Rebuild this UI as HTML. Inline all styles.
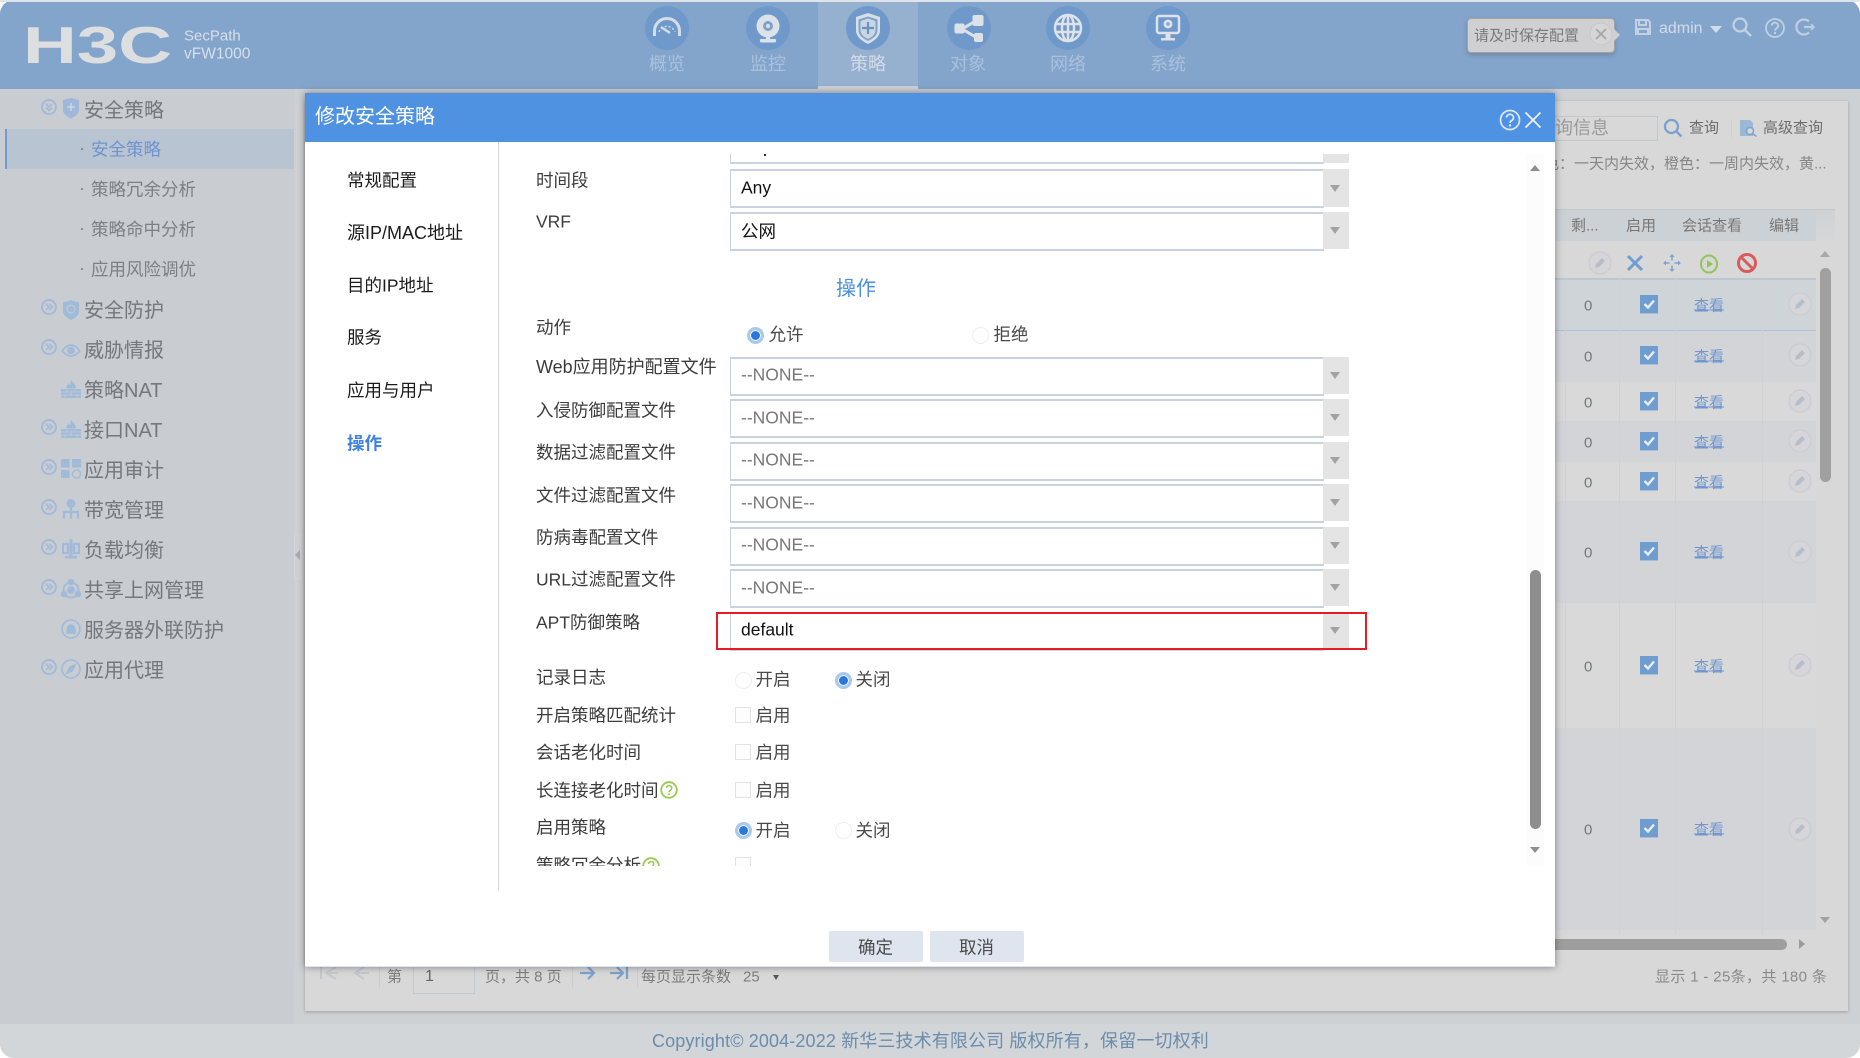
<!DOCTYPE html>
<html lang="zh-CN"><head><meta charset="utf-8"><title>修改安全策略</title>
<style>
html,body{margin:0;padding:0;width:1860px;height:1058px;overflow:hidden;background:#fff}
body{font-family:"Liberation Sans","Noto Sans CJK SC",sans-serif;position:relative}
div,span,svg{position:absolute}
.t{white-space:nowrap;line-height:1;transform:translateY(-50%)}
.nl{font-size:18px;color:#aac1dc;transform:translate(-50%,-50%);white-space:nowrap;line-height:1;margin-top:1px}
.nc{width:44px;height:44px;border-radius:50%;background:#6f99cb;top:6px}
.sb{font-size:20px;color:#74777b;left:84px;margin-top:1px}
.ss{font-size:17.5px;color:#7c7f83;left:91px;margin-top:1px}
.sd{width:2px;height:2px;background:#8a8d90;left:81px}
.th{font-size:15px;color:#777}
.c{left:1640px;width:18px;height:18px;background:#6f9dd0;box-shadow:0 1px 0 #a9bdd4}
.v{font-size:15px;color:#75787b;left:1584px}
.k{font-size:15px;color:#6f96d0;left:1694px;text-decoration:underline;text-decoration-thickness:1px;text-underline-offset:-1px}
.e{left:1788px}
.r{left:1310px;width:506px}
.cl{width:1px;background:#cfd1d4;top:279px;height:655px}
.lb{font-size:17.5px;color:#3c3c3c;left:536px;margin-top:1px}
.mn{font-size:17.5px;color:#1c1c1c;left:347px;margin-top:1px}
.sel{left:730px;width:592px;height:35px;border:1px solid #c9d3e0;border-width:2px 1px 2px 1px;background:#fff}
.arr{width:26px;background:#e4e4e4;left:1323px}
.tri{width:0;height:0;border-left:5.500px solid transparent;border-right:5.500px solid transparent;border-top:7px solid #a2a2a2;left:1330px;margin-top:1px}
.sv{font-size:17.5px;color:#777;left:741px}
.ra{width:17px;height:17px;border-radius:50%;box-sizing:border-box;border:1px solid #eee;background:#fff}
.ra.on{border:3px solid #a9c9ef;background:#2a78dc;box-shadow:inset 0 0 0 1px #fff}
.cb{width:16px;height:16px;box-sizing:border-box;border:1px solid #e2e2e2;background:#fdfdfd;left:735px}
.op{font-size:17.5px;color:#4a4a4a}
.pg{font-size:15px;color:#7d7d7d;top:977px}
</style></head><body>

<!-- page background -->
<div style="left:0;top:0;width:1860px;height:1058px;background:#cfd1d5;border-radius:14px 14px 14px 14px;overflow:hidden">
  <div style="left:294px;top:89px;width:1566px;height:935px;background:#ced1d4"></div>
  <div style="left:0;top:89px;width:294px;height:935px;background:#c9ccd1"></div>
  <div style="left:0;top:1024px;width:1860px;height:34px;background:#d3d6d8"></div>
  <div style="left:0;top:2px;width:1860px;height:87px;background:#83a5cc"></div>
</div>
<div style="left:0;top:0;width:1860px;height:2px;background:#dfe4ea"></div>

<!-- header -->
<svg style="left:20px;top:20px" width="160" height="50"><text x="3" y="43" font-family="Liberation Sans" font-weight="700" font-size="52" fill="#dcdee0" textLength="149" lengthAdjust="spacingAndGlyphs">H3C</text></svg>
<div class="t" style="left:184px;top:36px;font-size:15px;color:#d8dfe8">SecPath</div>
<div class="t" style="left:184px;top:54px;font-size:15.500px;color:#d8dfe8">vFW1000</div>

<div style="left:818px;top:2px;width:100px;height:84px;background:#96b0d0"></div>
<div style="left:818px;top:86px;width:100px;height:3px;background:#cdd2d8"></div>

<div class="nc" style="left:645px"></div>
<div class="nc" style="left:746px"></div>
<div class="nc" style="left:846px"></div>
<div class="nc" style="left:947px"></div>
<div class="nc" style="left:1046px"></div>
<div class="nc" style="left:1146px"></div>

<svg style="left:645px;top:6px" width="44" height="44" fill="none" stroke="#d5dde6"><path d="M9.500 30v-5a12.500 12.500 0 0 1 25 0v5" stroke-width="3"/><path d="M16 21l9 6" stroke-width="2.500"/><path d="M14 26a8.500 8.500 0 0 1 16 0" stroke-width="1.500" stroke-dasharray="2 2"/></svg>
<svg style="left:746px;top:6px" width="44" height="44"><circle cx="22" cy="20" r="11.500" fill="#dde2e8"/><circle cx="22" cy="20" r="5" fill="#7ea2cb"/><circle cx="22" cy="20" r="2" fill="#dde2e8"/><rect x="20" y="31" width="4" height="3" fill="#dde2e8"/><rect x="14" y="33" width="16" height="3.500" rx="1" fill="#dde2e8"/></svg>
<svg style="left:846px;top:6px" width="44" height="44"><path d="M22 7l12 4v13c0 7-6 11-12 14-6-3-12-7-12-14V11z" fill="#d8dfe7"/><path d="M22 10.500l9.500 3v10.500c0 5.500-4.500 8.500-9.500 11-5-2.500-9.500-5.500-9.500-11V13.500z" fill="#7da3cc"/><path d="M22 12.500l7.500 2.500v9c0 4.500-3.500 7-7.500 9z M22 12.500l-7.500 2.500v9c0 4.500 3.500 7 7.500 9z" fill="#c9d6e4"/><path d="M22 16v12M16 22h12" stroke="#6c92bf" stroke-width="2.200"/></svg>
<svg style="left:947px;top:6px" width="44" height="44"><path d="M15 23L32 13M15 23l17 10" stroke="#dde2e8" stroke-width="3"/><rect x="7.500" y="17.500" width="10" height="10" rx="2" fill="#dde2e8"/><rect x="25.500" y="9" width="11" height="11" rx="2" fill="#dde2e8"/><rect x="27" y="27" width="9" height="9" rx="2" fill="#dde2e8"/></svg>
<svg style="left:1046px;top:6px" width="44" height="44" fill="none" stroke="#dde2e8" stroke-width="2.500"><circle cx="22" cy="22" r="13"/><ellipse cx="22" cy="22" rx="6" ry="13"/><path d="M22 9v26M9.500 18h25M9.500 26h25"/></svg>
<svg style="left:1146px;top:6px" width="44" height="44"><rect x="11" y="10" width="22" height="17" rx="2" fill="none" stroke="#dde2e8" stroke-width="2.500"/><circle cx="22" cy="18" r="4.500" fill="#dde2e8"/><circle cx="22" cy="18" r="1.700" fill="#7da3cc"/><rect x="19.500" y="28" width="5" height="4" fill="#dde2e8"/><rect x="15" y="32" width="14" height="2.500" fill="#dde2e8"/></svg>

<div class="nl" style="left:667px;top:63px">概览</div>
<div class="nl" style="left:768px;top:63px">监控</div>
<div class="nl" style="left:868px;top:63px;color:#d3dce6">策略</div>
<div class="nl" style="left:968px;top:63px">对象</div>
<div class="nl" style="left:1068px;top:63px">网络</div>
<div class="nl" style="left:1168px;top:63px">系统</div>

<!-- tooltip -->
<div style="left:1467px;top:18px;width:148px;height:35px;box-sizing:border-box;background:#d0d0d3;border:1px solid #a3a3a3;border-radius:4px;box-shadow:0 2px 5px rgba(60,60,60,.3)"></div>
<div style="left:1614px;top:29px;width:0;height:0;border-left:6px solid #d0d0d3;border-top:6px solid transparent;border-bottom:6px solid transparent"></div>
<div class="t" style="left:1474px;top:36px;font-size:15px;color:#7a7a7a">请及时保存配置</div>
<svg style="left:1589px;top:22px" width="24" height="24"><circle cx="12" cy="12" r="11" fill="#d6d6d9" stroke="#c8c8cb"/><path d="M7 7l10 10M17 7L7 17" stroke="#a6a6a8" stroke-width="1.800"/></svg>

<svg style="left:1634px;top:18px" width="18" height="18" fill="none" stroke="#c4d1e0" stroke-width="2"><path d="M2 2h12l2 2v12H2z"/><path d="M5 2v5h7V2M4 11h10v5H4z"/></svg>
<div class="t" style="left:1659px;top:28px;font-size:16px;color:#d3dce6;margin-top:1px">admin</div>
<div style="left:1710px;top:26px;width:0;height:0;border-left:6.500px solid transparent;border-right:6.500px solid transparent;border-top:7px solid #d3dce6"></div>
<svg style="left:1732px;top:17px" width="20" height="20" fill="none" stroke="#c4d1e0" stroke-width="2.300"><circle cx="8" cy="8" r="6.500"/><path d="M13 13l6 6"/></svg>
<svg style="left:1764px;top:17px" width="22" height="22"><circle cx="11" cy="11" r="9" fill="none" stroke="#c0d0e2" stroke-width="1.800"/><path d="M7.800 8.500a3.200 3 0 1 1 4.800 2.700c-1 .7-1.500 1.200-1.500 2.500" fill="none" stroke="#c0d0e2" stroke-width="1.800"/><circle cx="11" cy="16" r="1.200" fill="#c0d0e2"/></svg>
<svg style="left:1795px;top:17px" width="22" height="20" fill="none" stroke="#c0d0e2" stroke-width="2.200"><path d="M14 4.500a7.500 7.500 0 1 0 0 11"/><path d="M9 10h9"/><path d="M16 7l3 3-3 3" stroke-width="1.500"/></svg>

<!-- sidebar -->
<div style="left:5px;top:129px;width:289px;height:40px;background:#b9c4d3;border-left:2px solid #6f9bd1;box-sizing:border-box"></div>
<svg width="0" height="0" style="left:0;top:0"><defs>
<g id="ch"><circle cx="8" cy="8" r="7" fill="none" stroke="#9db8da" stroke-width="1.700"/><path d="M5 5l3 3-3 3M8.500 5l3 3-3 3" fill="none" stroke="#9db8da" stroke-width="1.500"/></g>
<g id="fw"><path d="M10 0c.5 3 5 4.500 5 9.500H5c0-2.500 1.500-3 2.500-5 .5 1 1 1.500 1.500 1.500C9.500 4 10 2 10 0z" fill="#a0bada"/><rect x="0" y="10" width="20" height="9" fill="#a0bada"/><path d="M0 13h20M0 16h20M6 10v3M14 10v3M10 13v3M4 16v3M16 16v3" stroke="#c9ccd1" stroke-width=".8"/></g>
</defs></svg>
<svg style="left:41px;top:99px" width="16" height="16"><circle cx="8" cy="8" r="7" fill="none" stroke="#9db8da" stroke-width="1.700"/><path d="M5 5l3 3 3-3M5 8.500l3 3 3-3" fill="none" stroke="#9db8da" stroke-width="1.500"/></svg>
<svg style="left:62px;top:97px" width="18" height="22"><path d="M9 1l8 2v10c0 4-4 6.500-8 8.500-4-2-8-4.500-8-8.500V3z" fill="#9db8d9"/><path d="M9 6v8M5 10h8" stroke="#cdd7e2" stroke-width="1.500"/></svg>
<div class="t sb" style="top:110px">安全策略</div>
<div class="sd" style="top:148px"></div><div class="t ss" style="top:149px;color:#6f93cc">安全策略</div>
<div class="sd" style="top:188px"></div><div class="t ss" style="top:189px">策略冗余分析</div>
<div class="sd" style="top:228px"></div><div class="t ss" style="top:229px">策略命中分析</div>
<div class="sd" style="top:268px"></div><div class="t ss" style="top:269px">应用风险调优</div>

<svg style="left:41px;top:299px" width="16" height="16"><use href="#ch"/></svg>
<svg style="left:62px;top:299px" width="18" height="22"><path d="M1 3c3 0 6-1 8-2 2 1 5 2 8 2v9c0 4-4 7-8 9-4-2-8-5-8-9z" fill="#a0bada"/><circle cx="9" cy="10" r="4" fill="none" stroke="#c9ccd1"/></svg>
<div class="t sb" style="top:310px">安全防护</div>
<svg style="left:41px;top:339px" width="16" height="16"><use href="#ch"/></svg>
<svg style="left:61px;top:342px" width="20" height="16"><path d="M1 9c3-4 6-6 9-6s6 2 9 6" fill="none" stroke="#a0bada" stroke-width="1.800"/><path d="M1 9c3 3 6 5 9 5s6-2 9-5" fill="none" stroke="#a0bada" stroke-width="1.600"/><circle cx="10" cy="8.500" r="3.800" fill="#a0bada"/></svg>
<div class="t sb" style="top:350px">威胁情报</div>
<svg style="left:61px;top:379px" width="20" height="20"><use href="#fw"/></svg>
<div class="t sb" style="top:390px">策略NAT</div>
<svg style="left:41px;top:419px" width="16" height="16"><use href="#ch"/></svg>
<svg style="left:61px;top:419px" width="20" height="20"><use href="#fw"/></svg>
<div class="t sb" style="top:430px">接口NAT</div>
<svg style="left:41px;top:459px" width="16" height="16"><use href="#ch"/></svg>
<svg style="left:61px;top:459px" width="20" height="20" fill="#a0bada"><rect width="8.500" height="8.500"/><rect x="11" width="9" height="8.500"/><rect y="11" width="8.500" height="8"/><circle cx="15.500" cy="15" r="4" fill="none" stroke="#a0bada" stroke-width="1.300"/></svg>
<div class="t sb" style="top:470px">应用审计</div>
<svg style="left:41px;top:499px" width="16" height="16"><use href="#ch"/></svg>
<svg style="left:62px;top:499px" width="18" height="20" fill="none" stroke="#a0bada" stroke-width="2.200"><circle cx="9" cy="4.500" r="3.300" fill="#a0bada"/><path d="M9 8v5M2 19.500V13h14v6.500M9 13v6.500"/></svg>
<div class="t sb" style="top:510px">带宽管理</div>
<svg style="left:41px;top:539px" width="16" height="16"><use href="#ch"/></svg>
<svg style="left:62px;top:539px" width="18" height="20" fill="#a0bada"><rect x="7.500" y="0" width="3" height="18"/><rect x="3" y="17" width="12" height="2.500"/><path d="M1 5h5v9H1zM12 5h5v9h-5z" fill="none" stroke="#a0bada" stroke-width="2.200"/></svg>
<div class="t sb" style="top:550px">负载均衡</div>
<svg style="left:41px;top:579px" width="16" height="16"><use href="#ch"/></svg>
<svg style="left:61px;top:579px" width="20" height="20" fill="none" stroke="#a0bada" stroke-width="1.800"><circle cx="10" cy="11" r="7.500"/><circle cx="10" cy="11" r="3" fill="#a0bada"/><circle cx="10" cy="3" r="2.300" fill="#a0bada"/><circle cx="3" cy="15" r="2.300" fill="#a0bada"/><circle cx="17" cy="15" r="2.300" fill="#a0bada"/></svg>
<div class="t sb" style="top:590px">共享上网管理</div>
<svg style="left:61px;top:619px" width="20" height="20" fill="none" stroke="#a0bada" stroke-width="1.600"><circle cx="10" cy="10" r="9"/><path d="M6 14c0-5 1-8 4-8s4 3 4 8z" fill="#a0bada"/></svg>
<div class="t sb" style="top:630px">服务器外联防护</div>
<svg style="left:41px;top:659px" width="16" height="16"><use href="#ch"/></svg>
<svg style="left:61px;top:659px" width="20" height="20" fill="none" stroke="#a0bada" stroke-width="1.600"><circle cx="10" cy="10" r="9"/><path d="M14 6l-3 6-5 2 3-6z" fill="#a0bada"/></svg>
<div class="t sb" style="top:670px">应用代理</div>

<div style="left:294px;top:534px;width:5px;height:43px;border:1px solid #d2d4d8"></div>
<div style="left:295px;top:550px;width:0;height:0;border-right:5px solid #a7aaae;border-top:5px solid transparent;border-bottom:5px solid transparent"></div>

<!-- panel -->
<div style="left:305px;top:101px;width:1543px;height:910px;background:#d8d8d8;box-shadow:0 1px 3px rgba(90,90,90,.45)"></div>
<div style="left:1500px;top:116px;width:158px;height:25px;box-sizing:border-box;border:1px solid #c2c8d0"></div>
<div class="t" style="left:1555px;top:128px;font-size:18px;color:#9a9a9a">询信息</div>
<svg style="left:1663px;top:118px" width="20" height="20" fill="none" stroke="#7ba2cf" stroke-width="2.300"><circle cx="8.500" cy="8.500" r="6.500"/><path d="M13.500 13.500l5 5"/></svg>
<div class="t th" style="left:1689px;top:128px;color:#6d6d6d">查询</div>
<div style="left:1731px;top:120px;width:1px;height:17px;background:#cfcfcf"></div>
<svg style="left:1739px;top:118px" width="19" height="20"><path d="M1 2h10l3 3v13H1z" fill="#9cb8d8"/><circle cx="11" cy="13" r="3.500" fill="#d8d8d8" stroke="#7ba2cf" stroke-width="1.500"/><path d="M13.500 15.500l4 3" stroke="#7ba2cf" stroke-width="1.500"/></svg>
<div class="t th" style="left:1763px;top:128px;color:#6d6d6d">高级查询</div>
<div class="t th" style="left:1544px;top:164px;color:#868686">色：一天内失效，橙色：一周内失效，黄...</div>

<div style="left:1310px;top:209px;width:525px;height:32px;border-top:1px solid #c4c7ca;box-sizing:border-box;background:linear-gradient(#cfd2d5,#d6d7d8)"></div>
<div style="left:1310px;top:210px;width:506px;height:31px;background:#ccd1d5"></div>
<div class="t th" style="left:1571px;top:226px">剩...</div>
<div class="t th" style="left:1626px;top:226px">启用</div>
<div class="t th" style="left:1682px;top:226px">会话查看</div>
<div class="t th" style="left:1769px;top:226px">编辑</div>

<svg width="0" height="0" style="left:0;top:0"><defs><g id="ed"><circle cx="12" cy="12" r="11" fill="#d6d6da" stroke="#cccdd1" stroke-width="1.500"/><path d="M7 17l1-4 6-6 3 3-6 6z" fill="#b6bdc9"/></g>
<path id="ck" d="M4.500 9l3.500 3.500L14 5.500" fill="none" stroke="#e6edf4" stroke-width="2.400"/></defs></svg>

<svg style="left:1588px;top:251px" width="24" height="24"><use href="#ed"/></svg>
<svg style="left:1626px;top:254px" width="18" height="18"><path d="M2 2l14 14M16 2L2 16" stroke="#6f9dd0" stroke-width="3"/></svg>
<svg style="left:1663px;top:254px" width="18" height="18" fill="#7ba2cf"><path d="M9 0l2.500 3h-5zM9 18l2.500-3h-5zM0 9l3-2.500v5zM18 9l-3-2.500v5z"/><path d="M9 3v3.500M9 11.500V15M3 9h3.500M11.500 9H15" stroke="#7ba2cf" stroke-width="1.500"/></svg>
<svg style="left:1700px;top:254px" width="18" height="20"><ellipse cx="9" cy="10" rx="8" ry="8.500" fill="none" stroke="#94c35a" stroke-width="2"/><path d="M7 6l6 4-6 4z" fill="#94c35a"/></svg>
<svg style="left:1737px;top:253px" width="20" height="20"><circle cx="10" cy="10" r="8.500" fill="none" stroke="#d85c5c" stroke-width="3"/><path d="M4 4l12 12" stroke="#d85c5c" stroke-width="3"/></svg>

<div style="left:1310px;top:278px;width:506px;height:2px;background:#bcc7d1"></div>
<div class="r" style="top:280px;height:50px;background:#cfd4d8"></div>
<div class="r" style="top:330px;height:1px;background:#aec3da"></div>
<div class="r" style="top:331px;height:51px;background:#d2d4d8"></div>
<div class="r" style="top:382px;height:39px;background:#d9d9d9"></div>
<div class="r" style="top:421px;height:41px;background:#d2d4d8"></div>
<div class="r" style="top:462px;height:39px;background:#d9d9d9"></div>
<div class="r" style="top:501px;height:102px;background:#d2d4d8"></div>
<div class="r" style="top:603px;height:125px;background:#d9d9d9"></div>
<div class="r" style="top:728px;height:202px;background:#d2d4d8"></div>
<div class="cl" style="left:1565px"></div><div class="cl" style="left:1619px"></div><div class="cl" style="left:1675px"></div><div class="cl" style="left:1762px"></div>

<div class="t v" style="top:306px">0</div><div class="t v" style="top:357px">0</div><div class="t v" style="top:403px">0</div><div class="t v" style="top:443px">0</div><div class="t v" style="top:483px">0</div><div class="t v" style="top:553px">0</div><div class="t v" style="top:667px">0</div><div class="t v" style="top:830px">0</div>

<div class="c" style="top:295px"><svg width="18" height="18"><use href="#ck"/></svg></div>
<div class="c" style="top:346px"><svg width="18" height="18"><use href="#ck"/></svg></div>
<div class="c" style="top:392px"><svg width="18" height="18"><use href="#ck"/></svg></div>
<div class="c" style="top:432px"><svg width="18" height="18"><use href="#ck"/></svg></div>
<div class="c" style="top:472px"><svg width="18" height="18"><use href="#ck"/></svg></div>
<div class="c" style="top:542px"><svg width="18" height="18"><use href="#ck"/></svg></div>
<div class="c" style="top:656px"><svg width="18" height="18"><use href="#ck"/></svg></div>
<div class="c" style="top:819px"><svg width="18" height="18"><use href="#ck"/></svg></div>

<div class="t k" style="top:306px">查看</div><div class="t k" style="top:357px">查看</div><div class="t k" style="top:403px">查看</div><div class="t k" style="top:443px">查看</div><div class="t k" style="top:483px">查看</div><div class="t k" style="top:553px">查看</div><div class="t k" style="top:667px">查看</div><div class="t k" style="top:830px">查看</div>

<svg class="e" style="top:292px" width="24" height="24"><use href="#ed"/></svg>
<svg class="e" style="top:343px" width="24" height="24"><use href="#ed"/></svg>
<svg class="e" style="top:389px" width="24" height="24"><use href="#ed"/></svg>
<svg class="e" style="top:429px" width="24" height="24"><use href="#ed"/></svg>
<svg class="e" style="top:469px" width="24" height="24"><use href="#ed"/></svg>
<svg class="e" style="top:540px" width="24" height="24"><use href="#ed"/></svg>
<svg class="e" style="top:653px" width="24" height="24"><use href="#ed"/></svg>
<svg class="e" style="top:817px" width="24" height="24"><use href="#ed"/></svg>

<div style="left:1820px;top:268px;width:11px;height:214px;background:#a0a0a0;border-radius:6px"></div>
<div style="left:1820px;top:251px;width:0;height:0;border-left:5.500px solid transparent;border-right:5.500px solid transparent;border-bottom:6px solid #a8a8a8"></div>
<div style="left:1820px;top:917px;width:0;height:0;border-left:5.500px solid transparent;border-right:5.500px solid transparent;border-top:6px solid #a0a0a0"></div>
<div style="left:1500px;top:939px;width:287px;height:11px;background:#9e9e9e;border-radius:6px"></div>
<div style="left:1799px;top:939px;width:0;height:0;border-top:5.500px solid transparent;border-bottom:5.500px solid transparent;border-left:6px solid #9a9a9a"></div>
<div class="t th" style="left:1655px;top:977px;color:#8a8a8a;letter-spacing:.35px">显示 1 - 25条，共 180 条</div>

<!-- pagination -->
<svg style="left:320px;top:966px" width="60" height="14" fill="none" stroke="#c5c8cc" stroke-width="2"><path d="M1 1v12M16 1L6 7l10 6M6 7h12" /><path d="M44 1l-9 6 9 6M35 7h14"/></svg>
<div style="left:379px;top:966px;width:1px;height:22px;background:#cdcdcd"></div>
<div class="t pg" style="left:387px">第</div>
<div style="left:413px;top:967px;width:62px;height:27px;box-sizing:border-box;border:1px solid #c2c8d0;border-top:none"></div>
<div class="t pg" style="left:425px;top:977px;font-size:16px;color:#666">1</div>
<div class="t pg" style="left:485px">页，共 8 页</div>
<div style="left:572px;top:966px;width:1px;height:22px;background:#cdcdcd"></div>
<svg style="left:580px;top:966px" width="50" height="14" fill="none" stroke="#7ba2cf" stroke-width="2.200"><path d="M0 7h14M8 1l6 6-6 6"/><path d="M30 7h12M37 1l6 6-6 6M47 0v13"/></svg>
<div style="left:637px;top:966px;width:1px;height:22px;background:#cdcdcd"></div>
<div class="t pg" style="left:641px">每页显示条数</div>
<div class="t pg" style="left:743px">25</div>
<div style="left:773px;top:975px;width:0;height:0;border-left:3.500px solid transparent;border-right:3.500px solid transparent;border-top:5px solid #555"></div>

<div class="t" style="left:652px;top:1041px;font-size:18px;color:#6a8cad;letter-spacing:.13px">Copyright© 2004-2022 新华三技术有限公司 版权所有，保留一切权利</div>

<!-- modal -->
<div style="left:305px;top:93px;width:1250px;height:873px;background:#fff;box-shadow:0 0 7px rgba(40,40,50,.5);border-bottom:1px solid #dde4f2;box-sizing:content-box"></div>
<div style="left:305px;top:93px;width:1250px;height:49px;background:#4f92e2"></div>
<div class="t" style="left:315px;top:117px;font-size:20px;color:#fff">修改安全策略</div>
<svg style="left:1499px;top:109px" width="22" height="22"><circle cx="11" cy="11" r="9.500" fill="none" stroke="#dbe8f8" stroke-width="1.700"/><path d="M7.500 8.500a3.500 3.300 0 1 1 5.200 3c-1.100.7-1.700 1.200-1.700 2.500" fill="none" stroke="#dbe8f8" stroke-width="1.700"/><circle cx="11" cy="16.500" r="1.200" fill="#dbe8f8"/></svg>
<svg style="left:1524px;top:111px" width="18" height="18"><path d="M1.500 1.500l15 15M16.500 1.500l-15 15" stroke="#eef4fc" stroke-width="1.800"/></svg>

<div style="left:498px;top:142px;width:1px;height:749px;background:#d6d6d6"></div>
<div class="t mn" style="top:180px">常规配置</div>
<div class="t mn" style="top:232px;font-size:18px">源IP/MAC地址</div>
<div class="t mn" style="top:285px">目的IP地址</div>
<div class="t mn" style="top:337px">服务</div>
<div class="t mn" style="top:390px">应用与用户</div>
<div class="t mn" style="top:443px;color:#3f80e0;font-weight:700">操作</div>

<div style="left:1526px;top:154px;width:19px;height:712px;background:#fcfcfc"></div>
<div style="left:1530px;top:165px;width:0;height:0;border-left:5.500px solid transparent;border-right:5.500px solid transparent;border-bottom:6px solid #8e8e8e"></div>
<div style="left:1530px;top:847px;width:0;height:0;border-left:5.500px solid transparent;border-right:5.500px solid transparent;border-top:6px solid #8e8e8e"></div>
<div style="left:1530px;top:570px;width:11px;height:259px;background:#8e8e8e;border-radius:6px"></div>

<!-- form clip -->
<div style="left:0;top:154px;width:1525px;height:712px;overflow:hidden">
<div style="left:0;top:-154px;width:1525px;height:1058px">
  <div class="sel" style="top:125px"></div><div class="arr" style="top:154px;height:9px"></div>
  <div style="left:764px;top:154px;width:2px;height:2px;background:#333"></div>

  <div class="t lb" style="top:180px">时间段</div>
  <div class="sel" style="top:169px"></div><div class="arr" style="top:169px;height:38px"></div><div class="tri" style="top:184px"></div>
  <div class="t sv" style="top:188px;color:#111">Any</div>
  <div class="t lb" style="top:221px">VRF</div>
  <div class="sel" style="top:212px"></div><div class="arr" style="top:212px;height:37px"></div><div class="tri" style="top:226px"></div>
  <div class="t sv" style="top:232px;color:#111">公网</div>
  <div class="t" style="left:836px;top:289px;font-size:20px;color:#4a8fe0">操作</div>

  <div class="t lb" style="top:327px">动作</div>
  <div class="ra on" style="left:747px;top:327px"></div><div class="t op" style="left:768.500px;top:335px">允许</div>
  <div class="ra" style="left:972px;top:327px"></div><div class="t op" style="left:993.500px;top:335px">拒绝</div>

  <div class="t lb" style="top:366px;font-size:18px">Web应用防护配置文件</div>
  <div class="sel" style="top:357px"></div><div class="arr" style="top:357px;height:37px"></div><div class="tri" style="top:371px"></div><div class="t sv" style="top:375px">--NONE--</div>
  <div class="t lb" style="top:410px">入侵防御配置文件</div>
  <div class="sel" style="top:399px"></div><div class="arr" style="top:399px;height:37px"></div><div class="tri" style="top:413px"></div><div class="t sv" style="top:418px">--NONE--</div>
  <div class="t lb" style="top:452px">数据过滤配置文件</div>
  <div class="sel" style="top:442px"></div><div class="arr" style="top:442px;height:37px"></div><div class="tri" style="top:456px"></div><div class="t sv" style="top:460px">--NONE--</div>
  <div class="t lb" style="top:495px">文件过滤配置文件</div>
  <div class="sel" style="top:484px"></div><div class="arr" style="top:484px;height:37px"></div><div class="tri" style="top:498px"></div><div class="t sv" style="top:503px">--NONE--</div>
  <div class="t lb" style="top:537px">防病毒配置文件</div>
  <div class="sel" style="top:527px"></div><div class="arr" style="top:527px;height:37px"></div><div class="tri" style="top:541px"></div><div class="t sv" style="top:545px">--NONE--</div>
  <div class="t lb" style="top:579px">URL过滤配置文件</div>
  <div class="sel" style="top:569px"></div><div class="arr" style="top:569px;height:37px"></div><div class="tri" style="top:583px"></div><div class="t sv" style="top:588px">--NONE--</div>
  <div class="t lb" style="top:622px">APT防御策略</div>
  <div class="sel" style="top:612px;border-top-color:#fff"></div><div class="arr" style="top:612px;height:37px"></div><div class="tri" style="top:626px"></div><div class="t sv" style="top:630px;color:#111">default</div>
  <div style="left:716px;top:612px;width:651px;height:38px;box-sizing:border-box;border:2px solid #e81c24"></div>

  <div class="t lb" style="top:677px">记录日志</div>
  <div class="ra" style="left:735px;top:672px"></div><div class="t op" style="left:755.500px;top:680px">开启</div>
  <div class="ra on" style="left:835px;top:672px"></div><div class="t op" style="left:855.500px;top:680px">关闭</div>
  <div class="t lb" style="top:715px">开启策略匹配统计</div>
  <div class="cb" style="top:707px"></div><div class="t op" style="left:755.500px;top:716px">启用</div>
  <div class="t lb" style="top:752px">会话老化时间</div>
  <div class="cb" style="top:744px"></div><div class="t op" style="left:755.500px;top:753px">启用</div>
  <div class="t lb" style="top:790px">长连接老化时间</div>
  <svg style="left:660px;top:781px" width="18" height="18"><circle cx="9" cy="9" r="7.800" fill="none" stroke="#9ac94f" stroke-width="1.800"/><path d="M6.500 7a2.600 2.500 0 1 1 3.900 2.200c-.9.600-1.300 1-1.300 2" fill="none" stroke="#9ac94f" stroke-width="1.500"/><circle cx="9" cy="13.300" r="1" fill="#9ac94f"/></svg>
  <div class="cb" style="top:782px"></div><div class="t op" style="left:755.500px;top:791px">启用</div>
  <div class="t lb" style="top:827px">启用策略</div>
  <div class="ra on" style="left:735px;top:822px"></div><div class="t op" style="left:755.500px;top:831px">开启</div>
  <div class="ra" style="left:835px;top:822px"></div><div class="t op" style="left:855.500px;top:831px">关闭</div>
  <div class="t lb" style="top:865px">策略冗余分析</div>
  <svg style="left:642px;top:857px" width="18" height="18"><circle cx="9" cy="9" r="7.800" fill="none" stroke="#9ac94f" stroke-width="1.800"/><path d="M6.500 7a2.600 2.500 0 1 1 3.900 2.200" fill="none" stroke="#9ac94f" stroke-width="1.500"/></svg>
  <div class="cb" style="top:857px"></div>
</div></div>

<div style="left:829px;top:931px;width:94px;height:31px;background:#dfe5ef;border-radius:2px"></div>
<div class="t op" style="left:858px;top:948px">确定</div>
<div style="left:930px;top:931px;width:94px;height:31px;background:#dfe5ef;border-radius:2px"></div>
<div class="t op" style="left:959px;top:948px">取消</div>

</body></html>
